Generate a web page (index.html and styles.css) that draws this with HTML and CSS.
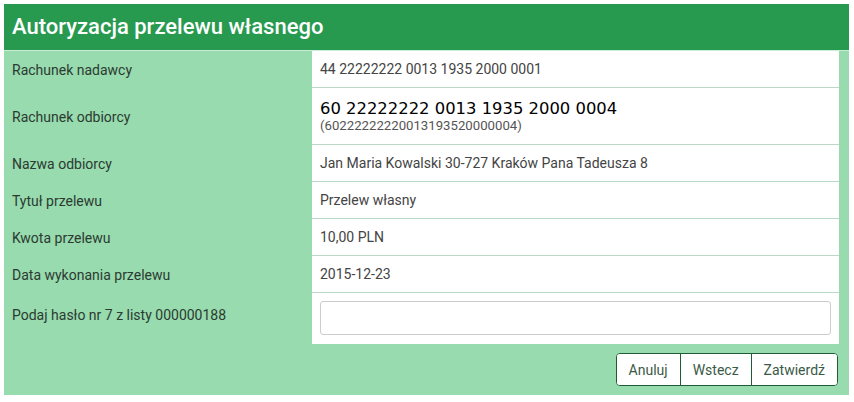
FILE: index.html
```html
<!DOCTYPE html>
<html lang="pl">
<head>
<meta charset="utf-8">
<title>Autoryzacja przelewu własnego</title>
<link rel="stylesheet" href="styles.css">
</head>
<body>
<div class="panel">
  <h1 class="panel-title">Autoryzacja przelewu własnego</h1>
  <div class="rows">
    <div class="row"><div class="label">Rachunek nadawcy</div><div class="value">44 22222222 0013 1935 2000 0001</div></div>
    <div class="row row-tall"><div class="label">Rachunek odbiorcy</div><div class="value value-stack"><span class="big">60 22222222 0013 1935 2000 0004</span><span class="small">(60222222220013193520000004)</span></div></div>
    <div class="row"><div class="label">Nazwa odbiorcy</div><div class="value">Jan Maria Kowalski 30-727 Kraków Pana Tadeusza 8</div></div>
    <div class="row"><div class="label">Tytuł przelewu</div><div class="value">Przelew własny</div></div>
    <div class="row"><div class="label">Kwota przelewu</div><div class="value">10,00 PLN</div></div>
    <div class="row"><div class="label">Data wykonania przelewu</div><div class="value">2015-12-23</div></div>
    <div class="row row-input"><div class="label label-top">Podaj hasło nr 7 z listy 000000188</div><div class="value value-input"><input class="pass" type="password"></div></div>
  </div>
  <div class="actions">
    <div class="btn-group">
      <button class="btn">Anuluj</button>
      <button class="btn">Wstecz</button>
      <button class="btn">Zatwierdź</button>
    </div>
  </div>
</div>
</body>
</html>
```
FILE: styles.css
```css
html, body {
  margin: 0;
  padding: 0;
  background: #ffffff;
}
body {
  font-family: Roboto, "Liberation Sans", sans-serif;
  font-size: 14px;
}
.panel {
  margin: 4px 5px 0 4px;
  background: #97dbae;
  padding-bottom: 9px;
}
.panel-title {
  margin: 0;
  height: 47px;
  box-sizing: border-box;
  background: #279a4f;
  color: #ffffff;
  font-size: 22px;
  font-weight: 500;
  line-height: 46px;
  padding-left: 8px;
  border-bottom: 1px solid #c9eed6;
}
.rows {
  display: flex;
  flex-direction: column;
  padding-right: 10px;
}
.row {
  display: grid;
  grid-template-columns: 308px 1fr;
  height: 37px;
}
.row-tall { height: 57px; }
.row-input { height: 51px; }
.label {
  display: flex;
  align-items: center;
  padding-left: 8px;
  color: #2c3a31;
}
.label-top {
  align-items: flex-start;
  padding-top: 14px;
}
.value {
  display: flex;
  align-items: center;
  padding-left: 8px;
  background: #ffffff;
  color: #444444;
  border-bottom: 1px solid #b9d9c4;
}
.value-stack {
  flex-direction: column;
  align-items: flex-start;
  justify-content: center;
  padding-top: 1px;
}
.big {
  font-family: "DejaVu Sans", Verdana, sans-serif;
  font-size: 16.4px;
  color: #000000;
  line-height: 18px;
}
.small {
  color: #555555;
  font-size: 13.2px;
  line-height: 16px;
}
.value-input {
  border-bottom: none;
  align-items: flex-start;
  padding: 8px 8px 0 8px;
}
.pass {
  width: 100%;
  height: 34px;
  box-sizing: border-box;
  border: 1px solid #cccccc;
  border-radius: 3px;
  background: #ffffff;
}
.actions {
  display: flex;
  justify-content: flex-end;
  padding: 9px 11px 0 0;
}
.btn-group {
  display: flex;
  border: 1px solid #1d5c34;
  border-radius: 4px;
  overflow: hidden;
  background: #ffffff;
}
.btn {
  font-family: Roboto, "Liberation Sans", sans-serif;
  font-size: 14px;
  color: #3b5a46;
  background: #ffffff;
  border: none;
  border-left: 1px solid #1d5c34;
  height: 31px;
  padding: 0 12px;
}
.btn:first-child { border-left: none; }
```
